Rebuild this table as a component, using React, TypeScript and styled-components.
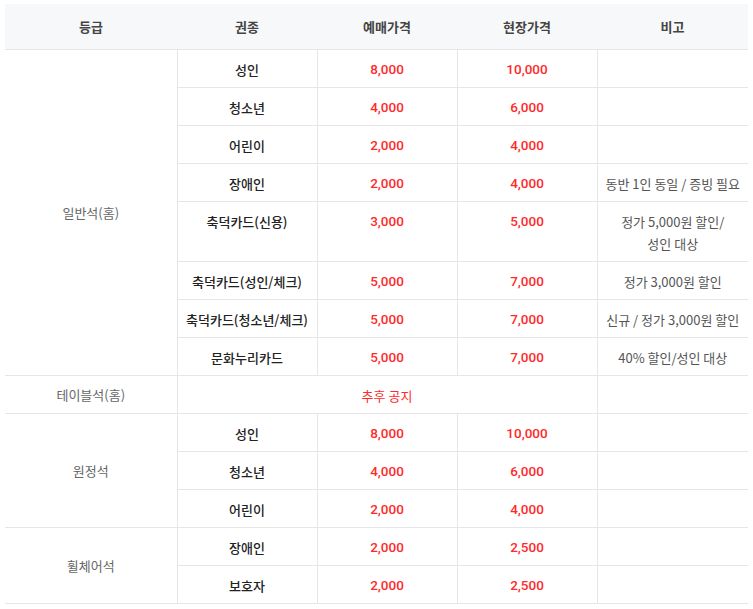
import React from "react";
import styled, { createGlobalStyle } from "styled-components";

const GlobalStyle = createGlobalStyle`
  html, body { margin: 0; padding: 0; background: #ffffff; }
  body { font-family: "Noto Sans CJK KR", "Noto Sans", sans-serif; }
`;

const Page = styled.div`
  padding: 4px 5px;
`;

const Table = styled.table`
  width: 743px;
  border-collapse: collapse;
  table-layout: fixed;
  font-family: "Noto Sans CJK KR", "Noto Sans", sans-serif;
  font-size: 13px;
  text-align: center;
`;

const HeadRow = styled.tr`
  background: #f7f8fa;
`;

const HeadCell = styled.th`
  height: 45px;
  padding: 0;
  font-weight: 700;
  color: #444444;
  border-bottom: 1px solid #e6e6e6;
  vertical-align: middle;
`;

type Kind = "group" | "type" | "price" | "note" | "notice";

const colorOf: Record<Kind, string> = {
  group: "#666666",
  type: "#222222",
  price: "#ff2a2a",
  note: "#555555",
  notice: "#ff2a2a",
};

const weightOf: Record<Kind, number> = {
  group: 400,
  type: 500,
  price: 500,
  note: 400,
  notice: 400,
};

const Cell = styled.td<{ $kind: Kind; $first?: boolean }>`
  padding: 9px 4px 6px;
  line-height: 22px;
  color: ${(p) => colorOf[p.$kind]};
  font-weight: ${(p) => weightOf[p.$kind]};
  vertical-align: ${(p) => (p.$kind === "group" ? "middle" : "top")};
  border-bottom: 1px solid #e6e6e6;
  border-left: ${(p) => (p.$first ? "none" : "1px solid #e6e6e6")};
  ${(p) => (p.$kind === "group" ? "padding: 0 4px;" : "")}
  ${(p) =>
    p.$kind === "price"
      ? `font-family: Roboto, "Noto Sans CJK KR", sans-serif; font-size: 13.5px; padding: 8px 4px 7px;`
      : ""}
`;

type Row = { type: string; pre: string; onsite: string; note?: string[] };
type Group = { name: string; rows?: Row[]; notice?: string };

const groups: Group[] = [
  {
    name: "일반석(홈)",
    rows: [
      { type: "성인", pre: "8,000", onsite: "10,000" },
      { type: "청소년", pre: "4,000", onsite: "6,000" },
      { type: "어린이", pre: "2,000", onsite: "4,000" },
      { type: "장애인", pre: "2,000", onsite: "4,000", note: ["동반 1인 동일 / 증빙 필요"] },
      { type: "축덕카드(신용)", pre: "3,000", onsite: "5,000", note: ["정가 5,000원 할인/", "성인 대상"] },
      { type: "축덕카드(성인/체크)", pre: "5,000", onsite: "7,000", note: ["정가 3,000원 할인"] },
      { type: "축덕카드(청소년/체크)", pre: "5,000", onsite: "7,000", note: ["신규 / 정가 3,000원 할인"] },
      { type: "문화누리카드", pre: "5,000", onsite: "7,000", note: ["40% 할인/성인 대상"] },
    ],
  },
  { name: "테이블석(홈)", notice: "추후 공지" },
  {
    name: "원정석",
    rows: [
      { type: "성인", pre: "8,000", onsite: "10,000" },
      { type: "청소년", pre: "4,000", onsite: "6,000" },
      { type: "어린이", pre: "2,000", onsite: "4,000" },
    ],
  },
  {
    name: "휠체어석",
    rows: [
      { type: "장애인", pre: "2,000", onsite: "2,500" },
      { type: "보호자", pre: "2,000", onsite: "2,500" },
    ],
  },
];

const widths = [172, 140, 140, 140, 151];
const headers = ["등급", "권종", "예매가격", "현장가격", "비고"];

function NoteText({ lines }: { lines?: string[] }) {
  if (!lines) return null;
  return (
    <>
      {lines.map((l, i) => (
        <React.Fragment key={i}>
          {i > 0 && <br />}
          {l}
        </React.Fragment>
      ))}
    </>
  );
}

export default function App() {
  return (
    <Page>
      <GlobalStyle />
      <Table>
        <colgroup>
          {widths.map((w, i) => (
            <col key={i} style={{ width: w }} />
          ))}
        </colgroup>
        <thead>
          <HeadRow>
            {headers.map((h) => (
              <HeadCell key={h}>{h}</HeadCell>
            ))}
          </HeadRow>
        </thead>
        <tbody>
          {groups.map((g) =>
            g.rows ? (
              g.rows.map((r, i) => (
                <tr key={g.name + i}>
                  {i === 0 && (
                    <Cell $kind="group" $first rowSpan={g.rows!.length}>
                      {g.name}
                    </Cell>
                  )}
                  <Cell $kind="type">{r.type}</Cell>
                  <Cell $kind="price">{r.pre}</Cell>
                  <Cell $kind="price">{r.onsite}</Cell>
                  <Cell $kind="note">
                    <NoteText lines={r.note} />
                  </Cell>
                </tr>
              ))
            ) : (
              <tr key={g.name}>
                <Cell $kind="group" $first>
                  {g.name}
                </Cell>
                <Cell $kind="notice" colSpan={3}>
                  {g.notice}
                </Cell>
                <Cell $kind="note" />
              </tr>
            )
          )}
        </tbody>
      </Table>
    </Page>
  );
}
